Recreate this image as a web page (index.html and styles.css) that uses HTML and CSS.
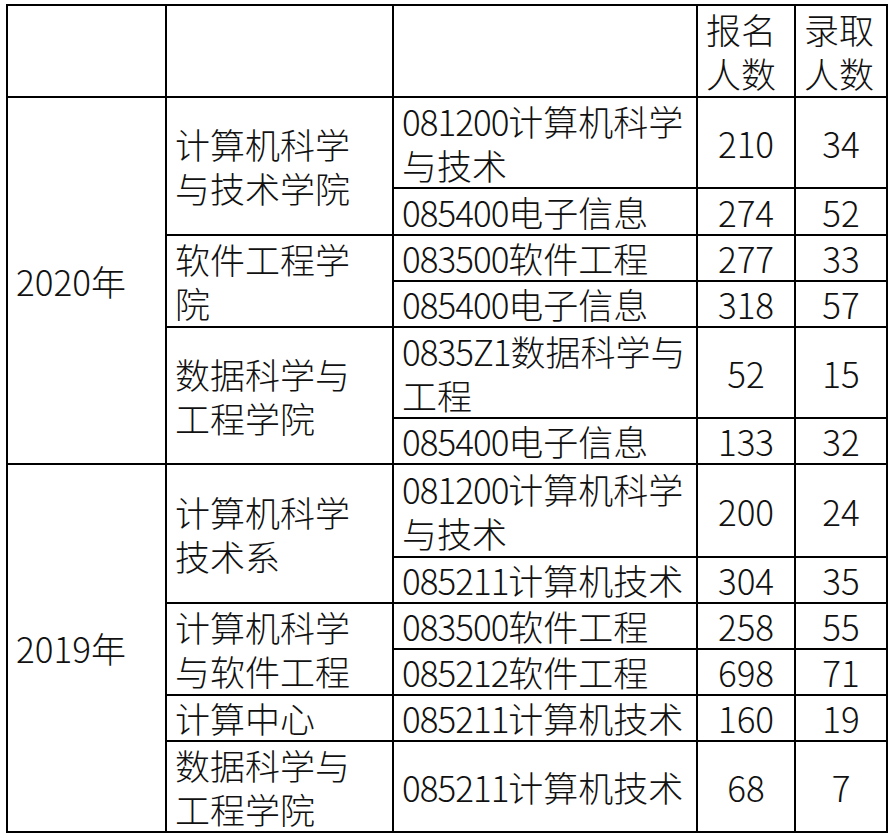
FILE: index.html
```html
<!DOCTYPE html>
<html lang="zh-CN">
<head>
<meta charset="utf-8">
<link rel="stylesheet" href="styles.css">
</head>
<body>
<table class="grid">
  <colgroup>
    <col class="c-year"><col class="c-college"><col class="c-major"><col class="c-num1"><col class="c-num2">
  </colgroup>
  <tr class="h92">
    <td></td><td></td><td></td>
    <td class="head">报名<br>人数</td>
    <td class="head">录取<br>人数</td>
  </tr>
  <tr class="h91">
    <td rowspan="6" class="year">2020年</td>
    <td rowspan="2">计算机科学<br>与技术学院</td>
    <td><span class="code">081200</span>计算机科学<br>与技术</td>
    <td class="num">210</td><td class="num">34</td>
  </tr>
  <tr class="h47">
    <td><span class="code">085400</span>电子信息</td>
    <td class="num">274</td><td class="num">52</td>
  </tr>
  <tr class="h46">
    <td rowspan="2">软件工程学<br>院</td>
    <td><span class="code">083500</span>软件工程</td>
    <td class="num">277</td><td class="num">33</td>
  </tr>
  <tr class="h46">
    <td><span class="code">085400</span>电子信息</td>
    <td class="num">318</td><td class="num">57</td>
  </tr>
  <tr class="h91">
    <td rowspan="2">数据科学与<br>工程学院</td>
    <td><span class="code">0835Z1</span>数据科学与<br>工程</td>
    <td class="num">52</td><td class="num">15</td>
  </tr>
  <tr class="h46">
    <td><span class="code">085400</span>电子信息</td>
    <td class="num">133</td><td class="num">32</td>
  </tr>
  <tr class="h93">
    <td rowspan="6" class="year">2019年</td>
    <td rowspan="2">计算机科学<br>技术系</td>
    <td><span class="code">081200</span>计算机科学<br>与技术</td>
    <td class="num">200</td><td class="num">24</td>
  </tr>
  <tr class="h46">
    <td><span class="code">085211</span>计算机技术</td>
    <td class="num">304</td><td class="num">35</td>
  </tr>
  <tr class="h46">
    <td rowspan="2">计算机科学<br>与软件工程</td>
    <td><span class="code">083500</span>软件工程</td>
    <td class="num">258</td><td class="num">55</td>
  </tr>
  <tr class="h46">
    <td><span class="code">085212</span>软件工程</td>
    <td class="num">698</td><td class="num">71</td>
  </tr>
  <tr class="h46">
    <td>计算中心</td>
    <td><span class="code">085211</span>计算机技术</td>
    <td class="num">160</td><td class="num">19</td>
  </tr>
  <tr class="h91">
    <td>数据科学与<br>工程学院</td>
    <td><span class="code">085211</span>计算机技术</td>
    <td class="num">68</td><td class="num">7</td>
  </tr>
</table>
</body>
</html>
```
FILE: styles.css
```css
html, body {
  background: #ffffff;
}
body {
  margin: 4px 0 0 6px;
  font-family: "Noto Sans CJK SC", "Noto Sans", sans-serif;
  font-weight: 300;
  color: #111111;
}
.grid {
  border-collapse: collapse;
  table-layout: fixed;
  width: 882px;
}
.c-year { width: 159px; }
.c-college { width: 227px; }
.c-major { width: 304px; }
.c-num1 { width: 98px; }
.c-num2 { width: 92px; }
.grid td {
  border: 2px solid #000000;
  padding: 0 0 0 8px;
  font-size: 35px;
  line-height: 44px;
  vertical-align: middle;
  text-align: left;
  white-space: nowrap;
}
.grid td.num {
  text-align: center;
  padding: 0;
}
.grid td.year {
  padding-left: 8px;
}
.code {
  letter-spacing: -1px;
}
.h92 { height: 92px; }
.h91 { height: 91px; }
.h93 { height: 93px; }
.h47 { height: 47px; }
.h46 { height: 46px; }
```
